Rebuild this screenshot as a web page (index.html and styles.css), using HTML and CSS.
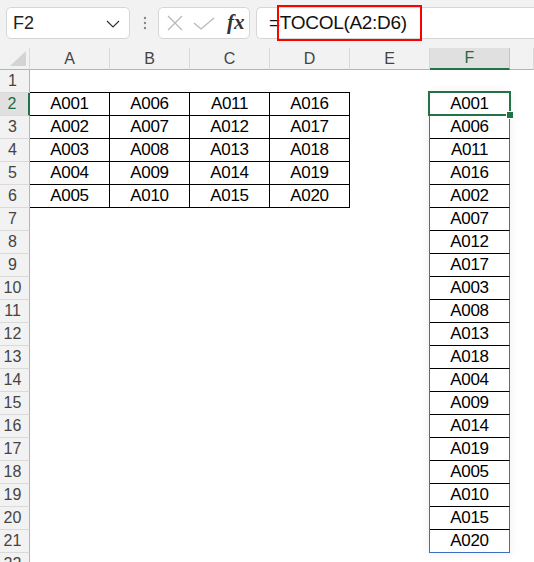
FILE: index.html
```html
<!DOCTYPE html>
<html>
<head>
<meta charset="utf-8">
<link rel="stylesheet" href="styles.css">
</head>
<body>
<div class="app">
  <div class="toolbar">
    <div class="namebox">
      <span class="nb-text">F2</span>
      <svg class="chev" width="14" height="8" viewBox="0 0 14 8"><polyline points="1,1 7,7 13,1" fill="none" stroke="#333" stroke-width="1.2"/></svg>
    </div>
    <div class="sep">
      <svg width="4" height="14" viewBox="0 0 4 14"><circle cx="2" cy="2" r="1.2" fill="#888"/><circle cx="2" cy="7" r="1.2" fill="#888"/><circle cx="2" cy="12" r="1.2" fill="#888"/></svg>
    </div>
    <div class="fxbox">
      <svg class="ico-x" width="16" height="16" viewBox="0 0 16 16"><path d="M1 1 L15 15 M15 1 L1 15" stroke="#b8b8b8" stroke-width="1.3" fill="none"/></svg>
      <svg class="ico-ok" width="22" height="13" viewBox="0 0 22 13"><polyline points="1,6 8,12 21,1" fill="none" stroke="#b8b8b8" stroke-width="1.3"/></svg>
      <span class="fx">fx</span>
    </div>
    <div class="formula">
      <span class="ftext">=TOCOL(A2:D6)</span>
    </div>
    <div class="redbox"></div>
  </div>

  <div class="sheet">
    <div class="row hdr">
      <div class="corner"><svg width="16" height="15" viewBox="0 0 16 15"><polygon points="16,0 16,15 0,15" fill="#d4d4d4"/></svg></div>
      <div class="ch">A</div><div class="ch">B</div><div class="ch">C</div><div class="ch">D</div><div class="ch">E</div><div class="ch sel">F</div><div class="ch"></div>
    </div>
    <div class="row"><div class="rh">1</div><div class="c t1"></div><div class="c t1"></div><div class="c t1"></div><div class="c t1"></div><div class="c"></div><div class="c s1"></div><div class="c"></div></div>
    <div class="row"><div class="rh rsel">2</div><div class="c t">A001</div><div class="c t">A006</div><div class="c t">A011</div><div class="c t">A016</div><div class="c e"></div><div class="c s">A001</div><div class="c"></div></div>
    <div class="row"><div class="rh">3</div><div class="c t">A002</div><div class="c t">A007</div><div class="c t">A012</div><div class="c t">A017</div><div class="c e"></div><div class="c s">A006</div><div class="c"></div></div>
    <div class="row"><div class="rh">4</div><div class="c t">A003</div><div class="c t">A008</div><div class="c t">A013</div><div class="c t">A018</div><div class="c e"></div><div class="c s">A011</div><div class="c"></div></div>
    <div class="row"><div class="rh">5</div><div class="c t">A004</div><div class="c t">A009</div><div class="c t">A014</div><div class="c t">A019</div><div class="c e"></div><div class="c s">A016</div><div class="c"></div></div>
    <div class="row"><div class="rh">6</div><div class="c t">A005</div><div class="c t">A010</div><div class="c t">A015</div><div class="c t">A020</div><div class="c e"></div><div class="c s">A002</div><div class="c"></div></div>
    <div class="row"><div class="rh">7</div><div class="c"></div><div class="c"></div><div class="c"></div><div class="c"></div><div class="c e"></div><div class="c s">A007</div><div class="c"></div></div>
    <div class="row"><div class="rh">8</div><div class="c"></div><div class="c"></div><div class="c"></div><div class="c"></div><div class="c e"></div><div class="c s">A012</div><div class="c"></div></div>
    <div class="row"><div class="rh">9</div><div class="c"></div><div class="c"></div><div class="c"></div><div class="c"></div><div class="c e"></div><div class="c s">A017</div><div class="c"></div></div>
    <div class="row"><div class="rh">10</div><div class="c"></div><div class="c"></div><div class="c"></div><div class="c"></div><div class="c e"></div><div class="c s">A003</div><div class="c"></div></div>
    <div class="row"><div class="rh">11</div><div class="c"></div><div class="c"></div><div class="c"></div><div class="c"></div><div class="c e"></div><div class="c s">A008</div><div class="c"></div></div>
    <div class="row"><div class="rh">12</div><div class="c"></div><div class="c"></div><div class="c"></div><div class="c"></div><div class="c e"></div><div class="c s">A013</div><div class="c"></div></div>
    <div class="row"><div class="rh">13</div><div class="c"></div><div class="c"></div><div class="c"></div><div class="c"></div><div class="c e"></div><div class="c s">A018</div><div class="c"></div></div>
    <div class="row"><div class="rh">14</div><div class="c"></div><div class="c"></div><div class="c"></div><div class="c"></div><div class="c e"></div><div class="c s">A004</div><div class="c"></div></div>
    <div class="row"><div class="rh">15</div><div class="c"></div><div class="c"></div><div class="c"></div><div class="c"></div><div class="c e"></div><div class="c s">A009</div><div class="c"></div></div>
    <div class="row"><div class="rh">16</div><div class="c"></div><div class="c"></div><div class="c"></div><div class="c"></div><div class="c e"></div><div class="c s">A014</div><div class="c"></div></div>
    <div class="row"><div class="rh">17</div><div class="c"></div><div class="c"></div><div class="c"></div><div class="c"></div><div class="c e"></div><div class="c s">A019</div><div class="c"></div></div>
    <div class="row"><div class="rh">18</div><div class="c"></div><div class="c"></div><div class="c"></div><div class="c"></div><div class="c e"></div><div class="c s">A005</div><div class="c"></div></div>
    <div class="row"><div class="rh">19</div><div class="c"></div><div class="c"></div><div class="c"></div><div class="c"></div><div class="c e"></div><div class="c s">A010</div><div class="c"></div></div>
    <div class="row"><div class="rh">20</div><div class="c"></div><div class="c"></div><div class="c"></div><div class="c"></div><div class="c e"></div><div class="c s">A015</div><div class="c"></div></div>
    <div class="row"><div class="rh">21</div><div class="c"></div><div class="c"></div><div class="c"></div><div class="c"></div><div class="c e"></div><div class="c s last">A020</div><div class="c"></div></div>
    <div class="row"><div class="rh">22</div><div class="c"></div><div class="c"></div><div class="c"></div><div class="c"></div><div class="c"></div><div class="c"></div><div class="c"></div></div>

    <div class="spill-shadow"></div>
    <div class="selbox"></div>
    <div class="handle"></div>
  </div>
</div>
</body>
</html>
```

FILE: styles.css
```css
* { box-sizing: border-box; }
html, body { margin: 0; padding: 0; }
body {
  width: 534px;
  height: 562px;
  overflow: hidden;
  background: #fff;
  font-family: "Liberation Sans", Arial, sans-serif;
}
.app { width: 534px; height: 562px; overflow: hidden; }

.toolbar {
  position: relative;
  height: 48px;
  background: #f2f2f2;
  display: flex;
  align-items: flex-start;
  padding: 7px 0 0 6px;
}
.namebox {
  width: 124px;
  height: 32px;
  background: #fff;
  border: 1px solid #d6d6d6;
  border-radius: 5px;
  display: flex;
  align-items: center;
  justify-content: space-between;
  padding: 0 9px 0 6px;
}
.nb-text { font-size: 18px; color: #222; }
.chev { margin-top: 1px; }
.sep {
  width: 28px;
  height: 32px;
  display: flex;
  align-items: center;
  justify-content: center;
  padding-left: 2px;
}
.fxbox {
  width: 92px;
  height: 32px;
  background: #fff;
  border: 1px solid #d6d6d6;
  border-radius: 5px;
  display: flex;
  align-items: center;
  padding-left: 8px;
}
.ico-x { margin-right: 10px; }
.ico-ok { margin-right: 12px; margin-top: 1px; }
.fx {
  font-family: "Liberation Serif", "Times New Roman", serif;
  font-style: italic;
  font-weight: bold;
  font-size: 21px;
  color: #333;
  margin-top: -1px;
}
.formula {
  margin-left: 6px;
  flex: 1;
  height: 32px;
  background: #fff;
  border: 1px solid #d6d6d6;
  border-right: none;
  border-radius: 5px 0 0 5px;
  display: flex;
  align-items: center;
  padding-left: 12px;
}
.ftext { font-size: 19px; letter-spacing: -0.3px; color: #111; }
.redbox {
  position: absolute;
  left: 277px;
  top: 5px;
  width: 145px;
  height: 36px;
  border: 2px solid #ff0000;
}

.sheet { position: relative; }
.row {
  display: grid;
  grid-template-columns: 30px repeat(6, 80px) 24px;
  height: 23px;
}
.row.hdr { height: 22px; }
.row > div {
  display: flex;
  align-items: center;
  justify-content: center;
  font-size: 17px;
  letter-spacing: -0.3px;
  color: #000;
  white-space: nowrap;
}
.corner {
  background: #f2f2f2;
  border-right: 1px solid #dadada;
  border-bottom: 1px solid #b4b4b4;
  justify-content: flex-end !important;
  align-items: flex-end !important;
  padding: 0 3px 3px 0;
}
.ch {
  background: #f2f2f2;
  border-right: 1px solid #d8d8d8;
  border-bottom: 1px solid #b4b4b4;
  color: #444 !important;
  font-size: 16px !important;
  letter-spacing: 0 !important;
}
.ch.sel {
  background: #e0e0e0;
  border-right-color: #c4c4c4;
  border-bottom: 2px solid #217346;
  color: #1d6b40 !important;
}
.rh {
  background: #f2f2f2;
  border-right: 1px solid #b4b4b4;
  border-bottom: 1px solid #dadada;
  color: #444 !important;
  font-size: 16px !important;
  letter-spacing: 0 !important;
  padding-right: 4px;
}
.rh.rsel {
  background: #e0e0e0;
  border-right: 2px solid #217346;
  color: #1d6b40 !important;
}
.t { border-right: 1px solid #000; border-bottom: 1px solid #000; }
.t1 { border-bottom: 1px solid #000; }
.e { border-right: 1px solid #3c6fc4; }
.s1 { border-bottom: 1px solid #3c6fc4; }
.s { border-right: 1px solid #3c6fc4; border-bottom: 1px solid #000; }
.s.last { border-bottom-color: #3c6fc4; }

.spill-shadow {
  position: absolute;
  left: 429px;
  top: 44px;
  width: 81px;
  height: 461px;
  box-shadow: 0 0 10px rgba(0, 0, 0, 0.07);
  pointer-events: none;
}
.selbox {
  position: absolute;
  left: 428px;
  top: 43px;
  width: 83px;
  height: 25px;
  border: 2px solid #217346;
  pointer-events: none;
}
.handle {
  position: absolute;
  left: 506px;
  top: 63px;
  width: 8px;
  height: 8px;
  background: #217346;
  border: 1px solid #fff;
}
```
